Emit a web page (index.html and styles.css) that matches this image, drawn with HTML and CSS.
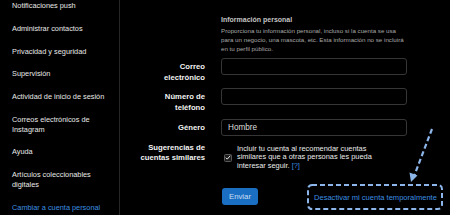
FILE: index.html
```html
<!DOCTYPE html>
<html lang="es">
<head>
<meta charset="utf-8">
<title>Editar perfil</title>
<link rel="stylesheet" href="styles.css">
</head>
<body>
<div class="page">
  <nav class="side">
    <a class="item">Notificaciones push</a>
    <a class="item">Administrar contactos</a>
    <a class="item">Privacidad y seguridad</a>
    <a class="item">Supervisión</a>
    <a class="item">Actividad de inicio de sesión</a>
    <a class="item">Correos electrónicos de Instagram</a>
    <a class="item">Ayuda</a>
    <a class="item">Artículos coleccionables digitales</a>
    <a class="item item-link">Cambiar a cuenta personal</a>
  </nav>
  <main class="main">
    <div class="intro">
      <h2 class="intro-title">Información personal</h2>
      <p class="intro-text">Proporciona tu información personal, incluso si la cuenta se usa para un negocio, una mascota, etc. Esta información no se incluirá en tu perfil público.</p>
    </div>
    <div class="row row-1">
      <label class="label">Correo electrónico</label>
      <div class="field"><input class="input" type="text"></div>
    </div>
    <div class="row row-2">
      <label class="label">Número de teléfono</label>
      <div class="field"><input class="input" type="text"></div>
    </div>
    <div class="row row-3">
      <label class="label">Género</label>
      <div class="field"><input class="input" type="text" value="Hombre"></div>
    </div>
    <div class="row row-4">
      <label class="label label-tight">Sugerencias de cuentas similares</label>
      <div class="field check-field">
        <span class="box"><svg viewBox="0 0 8 8" width="7" height="7"><path d="M1 4.2 L3 6.2 L7 1.6" fill="none" stroke="#f0f0f0" stroke-width="1.3"/></svg></span>
        <span class="check-text">Incluir tu cuenta al recomendar cuentas similares que a otras personas les pueda interesar seguir. <a class="help">[?]</a></span>
      </div>
    </div>
    <div class="actions">
      <button class="btn">Enviar</button>
      <a class="deactivate">Desactivar mi cuenta temporalmente</a>
    </div>
  </main>
  <svg class="annot" width="450" height="215" viewBox="0 0 450 215">
    <rect x="308" y="185" width="134" height="24" rx="4" fill="none" stroke="#8cb6ea" stroke-width="2" stroke-dasharray="5 3"/>
    <line x1="432" y1="129" x2="414.5" y2="175" stroke="#8cb6ea" stroke-width="2.2" stroke-dasharray="5 3"/>
    <polygon points="411,182 409.5,172.5 417.5,175.5" fill="#8cb6ea"/>
  </svg>
</div>
</body>
</html>
```
FILE: styles.css
```css
* { box-sizing: border-box; }
html, body { margin: 0; padding: 0; background: #000; }
body { font-family: "Liberation Sans", Arial, sans-serif; color: #e6e6e6; }
.page { position: relative; width: 450px; height: 215px; overflow: hidden; display: flex; background: #000; }
.side { width: 120px; flex: none; border-right: 1px solid #262626; display: flex; flex-direction: column; margin-top: -5px; padding-left: 12px; }
.item { display: block; max-width: 100px; font-size: 7.35px; line-height: 10px; padding: 6.35px 0; color: #e8e8e8; }
.item-link { color: #3d8fe0; }
.main { flex: 1; display: flex; flex-direction: column; }
.intro { margin: 15px 0 0 101px; width: 186px; }
.intro-title { margin: 0; font-size: 7px; line-height: 10px; font-weight: bold; color: #c4c4c4; }
.intro-text { margin: 1px 0 0; font-size: 6.2px; line-height: 9px; color: #a8a8a8; }
.row { display: flex; gap: 16px; }
.row-1 { margin-top: 5px; }
.row-2 { margin-top: 5px; }
.row-3 { margin-top: 6px; }
.row-4 { margin-top: 7px; }
.label { width: 85px; flex: none; text-align: right; font-size: 7.7px; line-height: 11px; padding: 3px 0 0 18px; font-weight: bold; color: #f2f2f2; }
.label-tight { padding-top: 0; line-height: 10px; }
.field { width: 186px; flex: none; }
.input { display: block; width: 186px; height: 17px; border: 1px solid #363636; border-radius: 3px; background: #000; color: #dedede; font-family: "Liberation Sans", Arial, sans-serif; font-size: 8.2px; padding: 0 6px; margin: 0; }
.check-field { display: flex; align-items: center; padding-top: 1.5px; }
.box { width: 8px; height: 8px; flex: none; margin-left: 3px; margin-right: 5px; border: 1px solid #5a5a5a; border-radius: 1.5px; background: #1c1c1c; display: flex; align-items: center; justify-content: center; }
.check-text { font-size: 7.4px; line-height: 8.7px; color: #ececec; width: 136px; }
.help { color: #3d8fe0; }
.actions { display: flex; align-items: center; margin-top: 17.5px; padding-left: 102px; gap: 56px; }
.btn { width: 36px; height: 17px; border: none; border-radius: 3px; background: #1b6fc2; color: #c9def4; font-family: "Liberation Sans", Arial, sans-serif; font-size: 7.8px; padding: 0; margin: 0; }
.deactivate { font-size: 7.55px; color: #3d8fe0; white-space: nowrap; margin-top: 2px; }
.annot { position: absolute; left: 0; top: 0; pointer-events: none; }
```
